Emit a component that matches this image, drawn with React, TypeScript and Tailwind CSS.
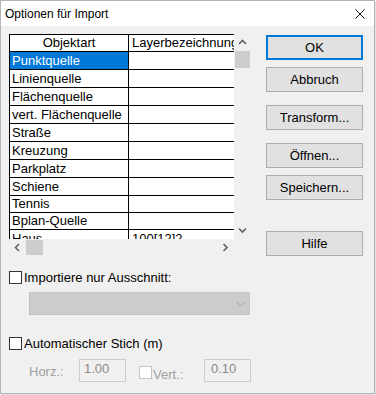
import React from 'react';

const FONT = { fontFamily: '"Liberation Sans", Arial, sans-serif' };

// row heights taken from the screenshot (last rows are 1px shorter)
const rows: { name: string; layer: string; h: string }[] = [
  { name: 'Punktquelle', layer: '', h: 'h-[18px]' },
  { name: 'Linienquelle', layer: '', h: 'h-[18px]' },
  { name: 'Flächenquelle', layer: '', h: 'h-[18px]' },
  { name: 'vert. Flächenquelle', layer: '', h: 'h-[18px]' },
  { name: 'Straße', layer: '', h: 'h-[18px]' },
  { name: 'Kreuzung', layer: '', h: 'h-[18px]' },
  { name: 'Parkplatz', layer: '', h: 'h-[18px]' },
  { name: 'Schiene', layer: '', h: 'h-[18px]' },
  { name: 'Tennis', layer: '', h: 'h-[17px]' },
  { name: 'Bplan-Quelle', layer: '', h: 'h-[17px]' },
  { name: 'Haus', layer: '100[12]2', h: 'h-[18px]' },
];

function Chevron({ dir }: { dir: 'up' | 'down' | 'left' | 'right' }) {
  const d = {
    up: 'M1 5 L4.5 1.5 L8 5',
    down: 'M1 1.5 L4.5 5 L8 1.5',
    left: 'M5 1 L1.5 4.5 L5 8',
    right: 'M1.5 1 L5 4.5 L1.5 8',
  }[dir];
  const vertical = dir === 'up' || dir === 'down';
  return (
    <svg width={vertical ? 9 : 7} height={vertical ? 7 : 9} viewBox={vertical ? '0 0 9 7' : '0 0 7 9'}>
      <path d={d} fill="none" stroke="#606060" strokeWidth="1.6" />
    </svg>
  );
}

function Button({ label, primary = false, className = '' }: { label: string; primary?: boolean; className?: string }) {
  return (
    <div
      className={`w-[97px] h-[25px] flex items-center justify-center bg-[#e1e1e1] text-[13px] text-black ${
        primary ? 'border-2 border-[#0078d7]' : 'border border-[#adadad]'
      } ${className}`}
    >
      {label}
    </div>
  );
}

function Checkbox({ disabled = false }: { disabled?: boolean }) {
  return (
    <div
      className={`w-[13px] h-[13px] shrink-0 bg-white border ${disabled ? 'border-[#c4c4c4]' : 'border-[#333333]'}`}
    />
  );
}

export default function App() {
  return (
    <div className="w-[376px] h-[395px] bg-white" style={FONT}>
      <div className="w-[375px] h-[394px] border border-[#b4b4b4] flex flex-col bg-[#f0f0f0] shadow-[1px_1px_0_#e0e0e0]">
        {/* title bar */}
        <div className="h-[25px] bg-white flex items-center justify-between pl-[4px] pr-[9px]">
          <span className="text-[12px] text-black">Optionen für Import</span>
          <svg width="10" height="10" viewBox="0 0 10 10">
            <path d="M0.5 0.5 L9.5 9.5 M9.5 0.5 L0.5 9.5" stroke="#111" strokeWidth="1" />
          </svg>
        </div>

        <div className="flex pt-[8px] pl-[8px]">
          {/* left column */}
          <div className="w-[242px] flex flex-col">
            {/* grid with scrollbars */}
            <div className="flex">
              <div className="w-[225px] h-[205px] overflow-hidden bg-white border-l border-t border-black text-[13px] text-black">
                <div className="flex h-[17px] border-b border-black">
                  <div className="w-[119px] shrink-0 border-r border-black flex items-center justify-center">
                    Objektart
                  </div>
                  <div className="w-[160px] shrink-0 pl-[3px] flex items-center whitespace-nowrap">
                    Layerbezeichnung
                  </div>
                </div>
                {rows.map((r, i) => (
                  <div key={r.name} className={`flex ${r.h} border-b border-black`}>
                    <div
                      className={`w-[119px] shrink-0 border-r border-black flex items-center pl-[2px] whitespace-nowrap ${
                        i === 0 ? 'bg-[#0078d7] text-white' : ''
                      }`}
                    >
                      {r.name}
                    </div>
                    <div className="w-[160px] shrink-0 pl-[3px] flex items-center whitespace-nowrap">{r.layer}</div>
                  </div>
                ))}
              </div>
              {/* vertical scrollbar */}
              <div className="w-[17px] h-[205px] flex flex-col items-center">
                <div className="h-[17px] flex items-center justify-center">
                  <Chevron dir="up" />
                </div>
                <div className="w-[15px] h-[17px] bg-[#cdcdcd]" />
                <div className="flex-1" />
                <div className="h-[17px] flex items-center justify-center">
                  <Chevron dir="down" />
                </div>
              </div>
            </div>
            {/* horizontal scrollbar */}
            <div className="flex h-[17px]">
              <div className="w-[225px] flex items-center">
                <div className="w-[17px] flex items-center justify-center">
                  <Chevron dir="left" />
                </div>
                <div className="w-[17px] h-[15px] bg-[#cdcdcd]" />
                <div className="flex-1" />
                <div className="w-[17px] flex items-center justify-center">
                  <Chevron dir="right" />
                </div>
              </div>
            </div>

            {/* options */}
            <div className="mt-[15px] flex items-center gap-[2px] text-[13px] text-black h-[13px]">
              <Checkbox />
              <span>Importiere nur Ausschnitt:</span>
            </div>
            <div className="mt-[8px] ml-[20px] w-[221px] h-[23px] bg-[#cccccc] border border-[#c4c4c4] flex items-center justify-end pr-[4px]">
              <svg width="9" height="6" viewBox="0 0 9 6">
                <path d="M0.5 1 L4.5 5 L8.5 1" fill="none" stroke="#a6a6a6" strokeWidth="1" />
              </svg>
            </div>
            <div className="mt-[22px] flex items-center gap-[2px] text-[13px] text-black h-[13px]">
              <Checkbox />
              <span>Automatischer Stich (m)</span>
            </div>
            <div className="mt-[9px] ml-[20px] flex items-center h-[23px] text-[13px]">
              <span className="w-[50px] text-[#a0a0a0] pt-[2px]">Horz.:</span>
              <div className="w-[47px] h-[23px] border border-[#cccccc] bg-[#f0f0f0] text-[#8a8a8a] pl-[4px] leading-[18px]">
                1.00
              </div>
              <div className="ml-[13px] flex items-end h-[23px] pb-[3px] gap-[1px]">
                <Checkbox disabled />
                <span className="text-[#a0a0a0] leading-[13px] translate-y-[2px]">Vert.:</span>
              </div>
              <div className="ml-auto w-[47px] h-[23px] border border-[#cccccc] bg-[#f0f0f0] text-[#8a8a8a] pl-[6px] leading-[18px]">
                0.10
              </div>
            </div>
          </div>

          {/* right column buttons */}
          <div className="ml-[15px] pt-[1px] flex flex-col">
            <Button label="OK" primary />
            <Button label="Abbruch" className="mt-[7px]" />
            <Button label="Transform..." className="mt-[13px]" />
            <Button label="Öffnen..." className="mt-[13px]" />
            <Button label="Speichern..." className="mt-[7px]" />
            <Button label="Hilfe" className="mt-[31px]" />
          </div>
        </div>
      </div>
    </div>
  );
}
